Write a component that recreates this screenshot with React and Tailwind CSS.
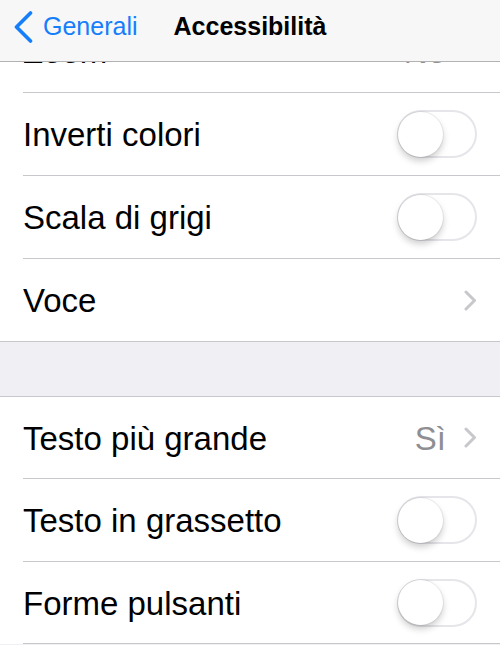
const font = { fontFamily: '"Liberation Sans", Arial, sans-serif' };

function Chevron() {
  return (
    <svg width="13" height="21" viewBox="0 0 13 21" fill="none">
      <path d="M2 2l8.5 8.5L2 19" stroke="#c7c7cc" strokeWidth="3" strokeLinecap="round" strokeLinejoin="round" />
    </svg>
  );
}

function Toggle() {
  return (
    <div className="relative w-[80px] h-[48px] rounded-full bg-white shadow-[inset_0_0_0_2px_#e5e5ea]">
      <div className="absolute left-[1px] top-[1.5px] w-[45px] h-[45px] rounded-full bg-white shadow-[0_4px_7px_rgba(0,0,0,0.2),0_0_0_1px_rgba(0,0,0,0.06)]" />
    </div>
  );
}

// tall = 83px row (incl. separator), otherwise 82px
function Row({ label, value, accessory, last, tall = true }) {
  return (
    <div className="pl-[23px] bg-white">
      <div
        className={
          "flex items-center justify-between pr-[23px] " +
          (tall ? "h-[83px] " : "h-[82px] ") +
          (last ? "" : "border-b border-[#c8c7cc]")
        }
      >
        <span className="text-[33px] leading-none text-black pt-[1px]">{label}</span>
        {accessory === "toggle" ? (
          <Toggle />
        ) : (
          <div className="flex items-center gap-[18px]">
            {value && <span className="text-[33px] leading-none text-[#8e8e93] pt-[1px]">{value}</span>}
            <Chevron />
          </div>
        )}
      </div>
    </div>
  );
}

export default function App() {
  return (
    <div className="w-[500px] h-[645px] overflow-hidden bg-[#efeff4] flex flex-col" style={font}>
      {/* NAV BAR */}
      <div className="shrink-0 h-[62px] bg-[#f7f7f7] border-b border-[#b2b2b2]">
        <div className="h-full grid grid-cols-[1fr_auto_1fr] items-center pb-2">
          <div className="flex items-center pl-[13px] gap-[10px] text-[#157efb]">
            <svg width="20" height="32" viewBox="0 0 20 32" fill="none">
              <path d="M17.5 2L3.5 16l14 14" stroke="#157efb" strokeWidth="3.6" strokeLinecap="round" strokeLinejoin="round" />
            </svg>
            <span className="text-[25px] leading-none">Generali</span>
          </div>
          <span className="text-[25px] leading-none font-bold text-black">Accessibilità</span>
          <div />
        </div>
      </div>

      {/* LIST (scrolled under the nav bar) */}
      <div className="flex-1 overflow-hidden">
        <div className="mt-[-52px] border-b border-[#c8c7cc]">
          <Row label="Zoom" value="No" accessory="chevron" />
          <Row label="Inverti colori" accessory="toggle" />
          <Row label="Scala di grigi" accessory="toggle" />
          <Row label="Voce" accessory="chevron" last tall={false} />
        </div>

        <div className="h-[54px]" />

        <div className="border-t border-[#c8c7cc]">
          <Row label="Testo più grande" value="Sì" accessory="chevron" tall={false} />
          <Row label="Testo in grassetto" accessory="toggle" />
          <Row label="Forme pulsanti" accessory="toggle" tall={false} />
        </div>
      </div>
    </div>
  );
}
